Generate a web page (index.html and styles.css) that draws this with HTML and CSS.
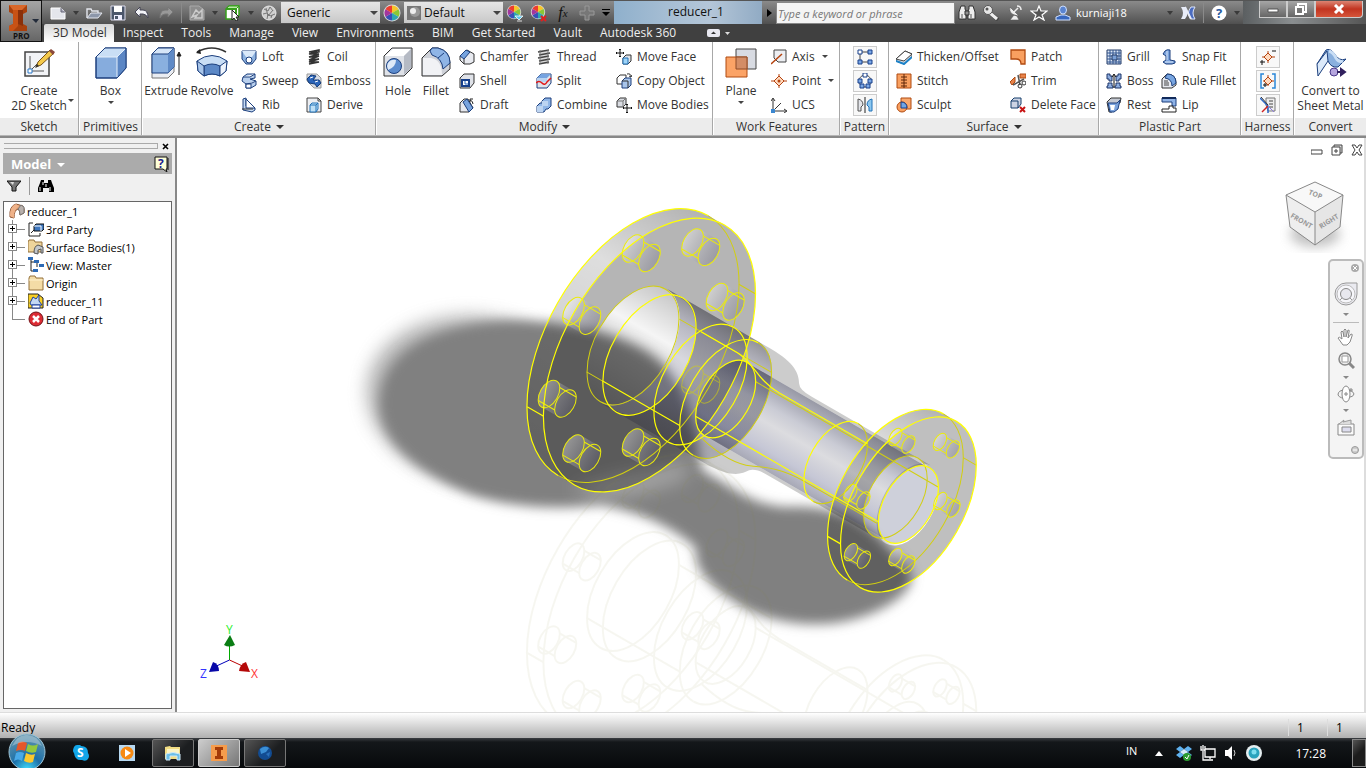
FILE: index.html
```html
<!DOCTYPE html>
<html lang="en">
<head>
  <meta charset="UTF-8">
  <meta name="viewport" content="width=device-width, initial-scale=1.0">
  <title>reducer_1</title>
  <link rel="stylesheet" href="styles.css">
</head>
<body>
<div class="app">

  <header class="header">
    <button class="app-button" aria-label="Application menu">
      <svg width="40" height="40" viewBox="0 0 40 40">
        <path d="M8 4h18v7l-4 2v10l4 2v5H8v-5l4-2V13l-4-2z" fill="#a8400c"/>
        <path d="M8 4h18l-5 5H12z" fill="#d9682a"/><path d="M12 9h5v16l-5 5H8v-5l4-2z" fill="#c85215"/>
        <path d="M17 9h5v16l-5-2z" fill="#8a300a"/>
        <path d="M31 18h7l-3 4z" fill="#222b3a"/>
        <text x="12" y="38" font-size="8" font-weight="700" fill="#111">PRO</text>
      </svg>
    </button>

    <!-- Title bar -->
    <div class="titlebar">
      <button class="qat" aria-label="New"><svg width="18" height="16" viewBox="0 0 18 16"><path d="M2 3h10l4 4v7H2z" fill="#e4e6ec" stroke="#fff"/><path d="M12 3v4h4" fill="#aab" stroke="#667"/></svg></button>
      <span class="caret"></span>
      <button class="qat" aria-label="Open"><svg width="18" height="16" viewBox="0 0 18 16"><path d="M2 13V4h4l1 2h6v2" fill="none" stroke="#e5e7ee" stroke-width="1.4"/><path d="M2 13l4-5h11l-4 5z" fill="#8d97aa" stroke="#e5e7ee"/></svg></button>
      <button class="qat" aria-label="Save"><svg width="16" height="16" viewBox="0 0 16 16"><path d="M1 1h14v14H1z" fill="#4b566b" stroke="#dde"/><path d="M4 1h8v6H4z" fill="#fff"/><path d="M4 10h8v5H4z" fill="#eef"/><path d="M5 11h3v3H5z" fill="#4b566b"/></svg></button>
      <button class="qat" aria-label="Undo"><svg width="16" height="16" viewBox="0 0 16 16"><path d="M6 2v3h3q5 0 5 8-2-4-5-4H6v3L1 7z" fill="#f3f4f8" stroke="#445"/></svg></button>
      <button class="qat" aria-label="Redo"><svg width="16" height="16" viewBox="0 0 16 16"><path d="M10 2v3H7q-5 0-5 8 2-4 5-4h3v3l5-5z" fill="#999" stroke="#777"/></svg></button>
      <span class="sep"></span>
      <button class="qat" aria-label="Update"><svg width="16" height="16" viewBox="0 0 16 16"><path d="M1 1h9l5 4v10H1z" fill="#8d8d8d" stroke="#aaa"/><path d="M3 12l4-7 3 3 3-3v8H6l2-3z" fill="none" stroke="#ccc" stroke-width="1.5"/></svg></button>
      <span class="caret"></span>
      <button class="qat" aria-label="Select"><svg width="18" height="16" viewBox="0 0 18 16"><path d="M2 4l3-3h10v9l-3 4H2z" fill="#fff" stroke="#37a01c" stroke-width="1.500"/><path d="M2 4l3-3h10l-3 3z" fill="#b9eaa6" stroke="#37a01c"/><path d="M2 4h10v10" fill="none" stroke="#37a01c" stroke-width="2"/><path d="M8 5v10l2-2 2 3 2-1-2-3h3z" fill="#fff" stroke="#222"/></svg></button>
      <span class="caret"></span>
      <button class="qat" aria-label="Appearance"><svg width="16" height="16" viewBox="0 0 16 16"><circle cx="8" cy="8" r="7" fill="#d0d0d0" stroke="#e5e5e5"/><path d="M3 4l4 2 2-4 3 4M2 9l4-1 3 3 5-2M6 14l1-5M10 13l1-3M5 3l2 8 5-6" fill="none" stroke="#777"/></svg></button>
      <label class="combo"><select aria-label="Material"><option>Generic</option></select></label>
      <button class="qat" aria-label="Colour wheel"><svg width="18" height="18" viewBox="-9 -9 18 18"><use href="#wheel"/></svg></button>
      <label class="combo combo-ball"><svg width="14" height="14" viewBox="0 0 14 14"><path d="M0 0h14v14H0z" fill="#777"/><circle cx="8" cy="6" r="5" fill="#999"/><circle cx="6" cy="5" r="3" fill="#eee"/></svg><select aria-label="Appearance"><option>Default</option></select></label>
      <button class="qat" aria-label="Adjust"><svg width="18" height="18" viewBox="-9 -9 18 18"><g transform="translate(-1 -1) scale(.85)"><use href="#wheel"/></g><path d="M0 3h8L4 7zM2 8h5" fill="#5ac8ee" stroke="#fff" stroke-width=".8"/></svg></button>
      <button class="qat" aria-label="Clear"><svg width="18" height="18" viewBox="-9 -9 18 18"><g transform="translate(-1 -1) scale(.85)"><use href="#wheel"/></g><path d="M2 3l5 5M7 3L2 8" stroke="#e02020" stroke-width="2"/></svg></button>
      <button class="qat fx">f<sub>x</sub></button>
      <button class="qat" aria-label="Add"><svg width="16" height="16" viewBox="0 0 16 16"><path d="M6 1h4v5h5v4h-5v5H6v-5H1V6h5z" fill="#777" stroke="#999"/></svg></button>
      <button class="qat-more" aria-label="Customize"><svg width="8" height="8" viewBox="0 0 8 8"><path d="M0 0h8v1H0zM0 3h8L4 7z"/></svg></button>

      <div class="doc-title">reducer_1</div>
      <button class="play" aria-label="Expand search"><svg width="5" height="8" viewBox="0 0 5 8"><path d="M0 0l5 4-5 4z"/></svg></button>
      <input class="search" type="text" aria-label="Search" placeholder="Type a keyword or phrase">

      <div class="info">
        <button class="qat" aria-label="Find"><svg width="18" height="16" viewBox="0 0 18 16"><path d="M3 1h4v3l1 2v8H1V7zM11 1h4l2 6v7h-7V6l1-2zM7 6h4v4H7z" fill="#eee" stroke="#333"/><path d="M4 9v4M13 9v4" stroke="#555"/></svg></button>
        <button class="qat" aria-label="Subscription"><svg width="18" height="16" viewBox="0 0 18 16"><path d="M8 8l8 7" stroke="#444" stroke-width="4"/><path d="M8 8l7 6" stroke="#eee" stroke-width="3"/><circle cx="6" cy="5" r="4.500" fill="#e6e6e6" stroke="#555"/><circle cx="5" cy="4" r="1.500" fill="#555"/></svg></button>
        <button class="qat" aria-label="Communication"><svg width="16" height="16" viewBox="0 0 16 16"><path d="M3 2q-2 8 9 9zM7 10l-4 5h9l-2-4z" fill="#eee" stroke="#555" stroke-width=".6"/><path d="M7 7l4-4M10 1q4 0 4 4" stroke="#eee" stroke-width="1.500" fill="none"/></svg></button>
        <button class="qat" aria-label="Favorites"><svg width="18" height="16" viewBox="0 0 18 16"><path d="M9 1l2 5h6l-5 4 2 5-5-3-5 3 2-5-5-4h6z" fill="#555" stroke="#fff" stroke-width="1.200"/></svg></button>
        <button class="qat user"><svg width="16" height="16" viewBox="0 0 16 16"><ellipse cx="8" cy="5" rx="3.500" ry="4" fill="#5a84d0" stroke="#cfe0ff"/><path d="M1 15v-3l5-2h4l5 2v3z" fill="#3767be" stroke="#cfe0ff"/></svg>kurniaji18</button>
        <span class="caret"></span>
        <button class="qat" aria-label="Exchange"><svg width="16" height="14" viewBox="0 0 16 14"><path d="M1 1h4q5 6 0 12H1q4-6 0-12z" fill="#e8ecf8"/><path d="M15 1h-4q-5 6 0 12h4q-4-6 0-12z" fill="#4b6cc0" stroke="#dce4f8"/><path d="M5 1l6 12" stroke="#e8ecf8" stroke-width="2"/></svg></button>
        <span class="sep"></span>
        <button class="qat" aria-label="Help"><svg width="16" height="16" viewBox="0 0 16 16"><circle cx="8" cy="8" r="7.500" fill="#fff"/><text x="5" y="13" font-size="13" font-weight="700" fill="#2a5a9e">?</text></svg></button>
        <span class="caret"></span>
      </div>

      <div class="window-buttons">
        <button aria-label="Minimize"><svg width="14" height="10" viewBox="0 0 14 10"><path d="M2 5h10v3H2z" fill="#fff" stroke="#555"/></svg></button>
        <button aria-label="Restore"><svg width="14" height="12" viewBox="0 0 14 12"><path d="M4 1h8v8H4z" fill="none" stroke="#fff" stroke-width="2"/><path d="M2 4h7v7H2z" fill="#777" stroke="#fff" stroke-width="2"/></svg></button>
        <button class="close" aria-label="Close"><svg width="12" height="10" viewBox="0 0 12 10"><path d="M2 1l8 8M10 1L2 9" stroke="#fff" stroke-width="3"/></svg></button>
      </div>
    </div>

    <nav class="tabs">
      <button class="active">3D Model</button><button>Inspect</button><button>Tools</button><button>Manage</button><button>View</button><button>Environments</button><button>BIM</button><button>Get Started</button><button>Vault</button><button>Autodesk 360</button>
      <button class="ribbon-toggle" aria-label="Minimize ribbon"><svg width="24" height="8" viewBox="0 0 24 8"><rect width="13" height="8" rx="2" fill="#e8e8f0"/><path d="M4 5h5L6.500 2.500z" fill="#333"/><path d="M18 3h5l-2.500 3z" fill="#ddd"/></svg></button>
    </nav>
  </header>

  <!-- Ribbon -->
  <div class="ribbon">
    <section class="panel p-sketch">
      <div class="tools">
        <button class="big"><svg width="32" height="32" viewBox="0 0 32 32"><path d="M2 5h24v24H2z" fill="#f2f3f6" stroke="#444" stroke-width="1.500"/><path d="M7 9v15h14M7 24l9-9" fill="none" stroke="#555"/><path d="M5 22h4v4H5z" fill="#fff" stroke="#2a78c8"/><path d="M13 20l2-5L27 3l4 3-13 12z" fill="#f4c94b" stroke="#7a5217"/><path d="M26 4l2-2 4 3-2 3z" fill="#8b4a3c"/><path d="M12 21l2-4 2 2z" fill="#333"/></svg>Create<br>2D Sketch</button>
        <span class="drop side"></span>
      </div>
      <h2>Sketch</h2>
    </section>

    <section class="panel p-prim">
      <div class="tools">
        <button class="big"><svg width="32" height="32" viewBox="0 0 32 32"><path d="M1 10L10 1h21v20l-9 10H1z" fill="#86acdd" stroke="#1c3f7d"/><path d="M1 10L10 1h21l-9 9z" fill="#c9def5"/><path d="M22 10l9-9v20l-9 10z" fill="#5b86c4"/><path d="M1 10L10 1h21v20l-9 10H1z" fill="none" stroke="#1c3f7d"/><path d="M2 10h20v20M22 10l8-8" fill="none" stroke="#e4effb"/></svg>Box<span class="drop"></span></button>
      </div>
      <h2>Primitives</h2>
    </section>

    <section class="panel p-create">
      <div class="tools">
        <button class="big"><svg width="32" height="32" viewBox="0 0 32 32"><path d="M2 7l6-6h16v24l-6 6H2z" fill="#e9ecf2" stroke="#777"/><path d="M2 7l6-6h16v19l-6 6H2z" fill="#8ab0df" stroke="#1c3f7d"/><path d="M2 7l6-6h16l-6 6z" fill="#d5e5f7" stroke="#1c3f7d"/><path d="M18 7l6-6v19l-6 6z" fill="#5f8ac6"/><path d="M29 28V7M27 9l2-4 2 4z" stroke="#222" fill="#222"/></svg>Extrude</button>
        <button class="big"><svg width="32" height="32" viewBox="0 0 32 32"><path d="M1 5Q16-3 30 5" fill="none" stroke="#333" stroke-width="1.500"/><path d="M0 6l4-4 1 5z" fill="#222"/><path d="M1 14Q16 3 31 14l-1 10-6 5q-8-4-16 0l-6-5z" fill="#c9def5" stroke="#1c3f7d"/><path d="M8 19q8-4 16 0v10q-8-4-16 0z" fill="#5c88c6" stroke="#1c3f7d"/><path d="M1 14l7 5v10l-6-5z" fill="#a9c6ea" stroke="#1c3f7d"/><path d="M31 14l-7 5v10l6-5z" fill="#eef4fc" stroke="#1c3f7d"/></svg>Revolve</button>
        <div class="cols">
          <button><svg viewBox="0 0 16 16"><path d="M1 2h14v8l-4 5H5l-4-5z" fill="#8fb3e0" stroke="#1c3f7d"/><path d="M1 2h14l-4 6H5z" fill="#dbe9f9"/><circle cx="8" cy="11" r="3" fill="#fff" stroke="#1c3f7d"/></svg>Loft</button>
          <button><svg viewBox="0 0 16 16"><path d="M2 4l4-3 8 0v4l-5 1 6 2v4l-5 3H5v-4l-4-3z" fill="#b9d0ee" stroke="#1c3f7d"/><path d="M2 4h7l5-3M5 11l6-1 4-2M5 11v4h5v-4z" fill="#fff" stroke="#1c3f7d"/></svg>Sweep</button>
          <button><svg viewBox="0 0 16 16"><path d="M2 2l3-1v8l9 2v2l-3 2-9-2z" fill="#c7dbf3" stroke="#1c3f7d"/><path d="M5 2l9 9H5z" fill="#fff" stroke="#1c3f7d"/><path d="M1 12h11" stroke="#333"/></svg>Rib</button>
          <button><svg viewBox="0 0 16 16"><path d="M3 3l10-2v2L3 5l10 0-10 3 10-1-10 4 10-1-10 3 10 0-10 2M3 3l10 0" fill="none" stroke="#333" stroke-width="1.500"/></svg>Coil</button>
          <button><svg viewBox="0 0 16 16"><path d="M1 1h10l4 4v10H8L1 8z" fill="#d7dbe2" stroke="#999"/><path d="M1 6l4-4 5 1-3 4 6 0 2 3-4 4-2-3-6-1z" fill="#2b65ba" stroke="#153c78"/><path d="M4 5l3-1M9 9l3-1" stroke="#fff"/></svg>Emboss</button>
          <button><svg viewBox="0 0 16 16"><path d="M1 1h11l3 3v11H1z" fill="#eceef2" stroke="#444"/><path d="M12 1v3h3" fill="none" stroke="#444"/><path d="M4 8l2-2h6v6l-2 3H4z" fill="#bfe0f6" stroke="#2272b8"/><path d="M4 8h6v7M10 8l2-2" fill="none" stroke="#2272b8"/></svg>Derive</button>
        </div>
      </div>
      <h2>Create <span class="fly"></span></h2>
    </section>

    <section class="panel p-modify">
      <div class="tools">
        <button class="big"><svg width="30" height="32" viewBox="0 0 30 32"><path d="M1 9l8-8h20v20l-8 8H1z" fill="#dfe2e8" stroke="#333"/><path d="M2 9l8-7h18l-7 7z" fill="#fff"/><path d="M21 9l7-7v19l-7 7z" fill="#b5bac4"/><circle cx="11" cy="19" r="7.500" fill="#5c8cce" stroke="#1c3f7d"/><path d="M4 19a7 7 0 0 1 9-6q0 7-8 10z" fill="#dfeaf8"/></svg>Hole</button>
        <button class="big"><svg width="30" height="32" viewBox="0 0 30 32"><path d="M1 11l10-10h6q12 3 12 15v6l-8 7H1z" fill="#cfd2d9" stroke="#333"/><path d="M11 1h6q12 3 12 15l-7 6q-1-11-11-14l-2-4z" fill="#8fb5e6" stroke="#1c3f7d"/><path d="M2 11h8q11 2 11 17H2z" fill="#f1f2f5"/><path d="M23 6l-6 5" stroke="#1c3f7d"/></svg>Fillet</button>
        <div class="cols">
          <button><svg viewBox="0 0 16 16"><path d="M1 7l7-6 7 4v8l-4 2H5l-4-4z" fill="#e8eaf0" stroke="#333"/><path d="M1 7l6-6 4 2-6 7z" fill="#76a3df" stroke="#1c3f7d"/><path d="M5 10v5" stroke="#333"/></svg>Chamfer</button>
          <button><svg viewBox="0 0 16 16"><path d="M1 5l4-4h10v9l-4 5H1z" fill="#dfe2e8" stroke="#333"/><path d="M3 7h7v6H3z" fill="#fff" stroke="#173f8a" stroke-width="2"/><path d="M6 8v3h3" stroke="#2b65ba" fill="none"/></svg>Shell</button>
          <button><svg viewBox="0 0 16 16"><path d="M1 6l4-4h4l5 9-4 4H1z" fill="#e6e8ee" stroke="#333"/><path d="M4 5l4-3 6 9-4 4z" fill="#78a3dd" stroke="#1c3f7d"/><path d="M11 3q3 1 3 4M11 5V2h3" fill="none" stroke="#222"/></svg>Draft</button>
          <button><svg viewBox="0 0 16 16"><path d="M4 1h8v14H4z" fill="#ddd"/><path d="M2 3l11-2M3 6l11-2M2 9l11-2M3 12l11-2M3 15l10-2" stroke="#444" stroke-width="1.500"/><path d="M4 1v14M12 1v14" stroke="#777"/></svg>Thread</button>
          <button><svg viewBox="0 0 16 16"><path d="M1 5l4-4h10v9l-4 5H1z" fill="#dfe3ea" stroke="#1c3f7d"/><path d="M1 5l4-4h10l-4 4z" fill="#76a3df"/><path d="M1 5h10v4H1z" fill="#b9d2f0"/><path d="M0 10q3-3 6 0t5-1l4-4" fill="none" stroke="#e01818" stroke-width="1.500"/></svg>Split</button>
          <button><svg viewBox="0 0 16 16"><path d="M6 4l3-3h6v8l-3 3h-2l-2 3H1V9l3-3h2z" fill="#8fb5e6" stroke="#1c3f7d"/><path d="M6 4h6v5H7v6H1V9h5z" fill="#bcd4f1"/></svg>Combine</button>
          <button><svg viewBox="0 0 16 16"><path d="M4 0v8M0 4h8M3 1l1-1 1 1M3 7l1 1 1-1M1 3L0 4l1 1M7 3l1 1-1 1" stroke="#111" fill="none"/><path d="M7 9l3-3h5v6l-3 3H7z" fill="#e1e4e9" stroke="#333"/><path d="M7 9h5v6H7z" fill="#9fd4f7" stroke="#2272b8"/></svg>Move Face</button>
          <button><svg viewBox="0 0 16 16"><path d="M1 5l3-3h6v6l-3 3H1z" fill="#fff" stroke="#333"/><path d="M6 8l3-3h6v7l-3 3H6z" fill="#a9c5ea" stroke="#1c3f7d"/><path d="M6 8h6v7M11 1q4-1 4 3M13 3l2 1 1-2" fill="none" stroke="#333"/></svg>Copy Object</button>
          <button><svg viewBox="0 0 16 16"><path d="M1 4l3-3h6v6l-3 3H1z" fill="#dadde3" stroke="#333"/><path d="M1 4h6v6M7 4l3-3" stroke="#777" fill="none"/><path d="M11 7v9M7 11h9M10 8l1-1 1 1M10 15l1 1 1-1M8 10l-1 1 1 1M15 10l1 1-1 1" stroke="#111" fill="none"/></svg>Move Bodies</button>
        </div>
      </div>
      <h2>Modify <span class="fly"></span></h2>
    </section>

    <section class="panel p-work">
      <div class="tools">
        <button class="big"><svg width="32" height="32" viewBox="0 0 32 32"><path d="M11 2h20v20H11z" fill="#d8dbe2" stroke="#444"/><path d="M1 10h21v20H1z" fill="#fba366" stroke="#b04a10"/><path d="M11 10h11v12H11z" fill="#d38d66" stroke="#8e4a26"/></svg>Plane<span class="drop"></span></button>
        <div class="cols">
          <button><svg viewBox="0 0 16 16"><path d="M3 1h12v12H7L3 9z" fill="#eceef2" stroke="#444"/><path d="M0 15L11 5" stroke="#b5430f" stroke-width="1.500"/></svg>Axis<span class="drop"></span></button>
          <button><svg viewBox="0 0 16 16"><path d="M8 1v14M0 8h16" stroke="#b5430f"/><path d="M8 3l5 5-5 5-5-5z" fill="#ffd9bd" stroke="#b5430f"/><circle cx="8" cy="8" r="1.500" fill="#b5430f"/></svg>Point<span class="drop"></span></button>
          <button><svg viewBox="0 0 16 16"><path d="M2 2v12h13M2 14l8-8M0 4l2-3 2 3M13 12l3 2-3 2" fill="none" stroke="#333"/><path d="M0 12h4v4H0z" fill="#3a87d0"/></svg>UCS</button>
        </div>
      </div>
      <h2>Work Features</h2>
    </section>

    <section class="panel p-pattern">
      <div class="tools icons-only">
        <button aria-label="Rectangular"><svg viewBox="0 0 16 16"><path d="M3 3h10M3 3v10M3 13h10" stroke="#444" fill="none"/><path d="M1 1h4v4H1z" fill="#fff" stroke="#173f8a"/><path d="M11 1h4v4h-4zM1 11h4v4H1zM11 11h4v4h-4z" fill="#7aa7e6" stroke="#173f8a"/></svg></button>
        <button aria-label="Circular"><svg viewBox="0 0 16 16"><circle cx="8" cy="8" r="6" fill="none" stroke="#555"/><path d="M6 0h4v4H6z" fill="#fff" stroke="#173f8a"/><path d="M1 6h4v4H1zM11 6h4v4h-4zM3 11h4v4H3zM9 11h4v4H9z" fill="#7aa7e6" stroke="#173f8a"/></svg></button>
        <button aria-label="Mirror"><svg viewBox="0 0 16 16"><path d="M8 0v16" stroke="#222"/><path d="M1 2q5 1 5 6l-2 2v4H1z" fill="#e3e5ea" stroke="#555"/><path d="M15 2q-5 1-5 6l2 2v4h3z" fill="#8cc7ef" stroke="#2272b8"/></svg></button>
      </div>
      <h2>Pattern</h2>
    </section>

    <section class="panel p-surface">
      <div class="tools">
        <div class="cols">
          <button><svg viewBox="0 0 16 16"><path d="M0 10l9-8 7 3v3l-8 7-8-3z" fill="#d9dce2" stroke="#444"/><path d="M0 10l9-8 7 3-8 7z" fill="#fff" stroke="#444"/><path d="M0 12l8 3 8-7" fill="none" stroke="#1c82c8" stroke-width="2"/></svg>Thicken/Offset</button>
          <button><svg viewBox="0 0 16 16"><path d="M1 1h14v14H1z" fill="#f9a060" stroke="#b04a10"/><path d="M8 1v14M5 4h6M5 7h6M5 10h6M5 13h6" stroke="#5e2708"/></svg>Stitch</button>
          <button><svg viewBox="0 0 16 16"><path d="M5 1h10v11H5z" fill="#f9a86d" stroke="#b04a10"/><circle cx="6" cy="10" r="5" fill="#f9a060" stroke="#b04a10"/><path d="M5 5q6 0 6 6H5z" fill="#6fa5e6" stroke="#173f8a"/></svg>Sculpt</button>
          <button><svg viewBox="0 0 16 16"><path d="M1 1h14v14h-4q0-5-5-5H1z" fill="#f9a060" stroke="#b04a10" stroke-width="1.300"/></svg>Patch</button>
          <button><svg viewBox="0 0 16 16"><path d="M0 9l5-5v5l-3 3zM10 1h6v4h-6z" fill="#e8834a" stroke="#b04a10"/><path d="M3 12L14 6M8 2l2 10" stroke="#555" stroke-width="1.500"/><circle cx="10" cy="13" r="2" fill="none" stroke="#333"/><circle cx="14" cy="10" r="2" fill="none" stroke="#333"/></svg>Trim</button>
          <button><svg viewBox="0 0 16 16"><path d="M1 4l3-3h7v6l-3 4H1z" fill="#cdd4e4" stroke="#173f6d"/><path d="M1 4h7v7" fill="none" stroke="#173f6d"/><path d="M10 10l5 5M15 10l-5 5" stroke="#c81414" stroke-width="2"/></svg>Delete Face</button>
        </div>
      </div>
      <h2>Surface <span class="fly"></span></h2>
    </section>

    <section class="panel p-plastic">
      <div class="tools">
        <div class="cols">
          <button><svg viewBox="0 0 16 16"><path d="M1 1h14v14H1z" fill="#dbe6f6" stroke="#223a66"/><path d="M4 1v14M7 1v14M10 1v14M13 1v14M1 4h14M1 7h14M1 10h14M1 13h14" stroke="#31558f"/><path d="M6 6h5v5H6z" fill="#7aa0d6" stroke="#223a66"/></svg>Grill</button>
          <button><svg viewBox="0 0 16 16"><path d="M1 1h3v2h2v5H3V6H1zM15 1h-3v2h-2v5h3V6h2zM2 10h4v3h1v2H1v-2h1zM10 10h4v3h1v2H9v-2h1z" fill="#8eaee0" stroke="#1c3468"/><path d="M8 15V2M6 4l2-3 2 3" stroke="#111" fill="none"/></svg>Boss</button>
          <button><svg viewBox="0 0 16 16"><path d="M1 5l4-4h10l-1 5-6 1-2 8H3z" fill="#c5cad4" stroke="#333"/><path d="M2 6h9l3-3-2 9-4 3H4z" fill="#7ba3dd" stroke="#1c3f7d"/><path d="M4 8h5l-1 5H5z" fill="#fff"/></svg>Rest</button>
          <button><svg viewBox="0 0 16 16"><path d="M4 2q2-2 5-1v10l5 1v2l-3 1H5l-3-2 3-2V7L2 5z" fill="#7ba3dd" stroke="#1c3f7d"/><path d="M6 2v9M4 13h8" stroke="#dbe8f8"/></svg>Snap Fit</button>
          <button><svg viewBox="0 0 16 16"><path d="M1 6l5-5q9 0 9 9v2l-4 3H1z" fill="#e6e9ef" stroke="#333"/><path d="M6 1q9 0 9 9l-4 3q0-7-7-8z" fill="#78a5e0" stroke="#1c3f7d"/><path d="M3 8h4M3 10h5M3 12h5" stroke="#444"/></svg>Rule Fillet</button>
          <button><svg viewBox="0 0 16 16"><path d="M1 1h14v8h-4V5H1z" fill="#8eb2e6" stroke="#1c3f7d"/><path d="M1 15v-3h7V9h4v2h3v4z" fill="#fff" stroke="#222"/><path d="M1 1h14" stroke="#112a5a" stroke-width="2"/></svg>Lip</button>
        </div>
      </div>
      <h2>Plastic Part</h2>
    </section>

    <section class="panel p-harness">
      <div class="tools icons-only">
        <button aria-label="Place pin"><svg viewBox="0 0 16 16"><path d="M8 2v12M2 8h13" stroke="#b5430f"/><path d="M8 4l4 4-4 4-4-4z" fill="#ffd9bd" stroke="#b5430f"/><path d="M12 2h4M0 13h5M2 11v5" stroke="#111"/></svg></button>
        <button aria-label="Pin group"><svg viewBox="0 0 16 16"><path d="M4 1H1v14h3M12 1h3v14h-3" fill="none" stroke="#2a86d8" stroke-width="1.500"/><path d="M8 2v11M3 8h11" stroke="#b5430f"/><path d="M8 4l4 4-4 4-4-4z" fill="#ffd9bd" stroke="#b5430f"/><path d="M3 12h4M5 10v4" stroke="#111"/></svg></button>
        <button aria-label="Harness properties"><svg viewBox="0 0 16 16"><path d="M6 1h9v13H8L6 8z" fill="#eee" stroke="#777"/><path d="M9 4h4M9 7h4M9 10h4" stroke="#444"/><path d="M0 1l8 8v7" stroke="#2a66c8" fill="none" stroke-width="1.500"/><path d="M8 9l-6 6" stroke="#d02020" stroke-width="1.500"/><path d="M1 0l7 8" stroke="#333"/><path d="M8 9l6 6" stroke="#8a7ad8"/></svg></button>
      </div>
      <h2>Harness</h2>
    </section>

    <section class="panel p-convert">
      <div class="tools">
        <button class="big"><svg width="32" height="32" viewBox="0 0 32 32"><path d="M2 17L11 3q4-2 8 3 5 9 12 6l-8 8q-7 1-10-6z" fill="#8ab0de" stroke="#1c3f7d"/><path d="M2 17L12 4l1 10-10 15z" fill="#dceafa" stroke="#1c3f7d"/><path d="M14 4q4 1 7 7 3 5 7 3" stroke="#c9def5" fill="none" stroke-width="3"/><circle cx="19" cy="25" r="4" fill="#b6a6de" stroke="#4b3a8c"/><path d="M22 25h5M26 22l4 3-4 3z" stroke="#31205e" stroke-width="2" fill="#31205e"/></svg>Convert to<br>Sheet Metal</button>
      </div>
      <h2>Convert</h2>
    </section>
  </div>

  <main class="workspace">
    <!-- Model browser -->
    <aside class="browser">
      <div class="grip"><span></span><button aria-label="Close panel"><svg width="7" height="7" viewBox="0 0 7 7"><path d="M1 1l5 5M6 1L1 6" stroke="#000" stroke-width="1.600"/></svg></button></div>
      <div class="browser-head"><button>Model <span class="fly"></span></button>
        <svg width="15" height="16" viewBox="0 0 15 16"><path d="M1 1h12v12h-1l1 3-4-3H1z" fill="#ffffd8" stroke="#111"/><path d="M14 2v12" stroke="#111"/><text x="4" y="12" font-size="12" font-weight="700" fill="#1c1c90">?</text></svg>
      </div>
      <div class="browser-tools">
        <button aria-label="Filter"><svg width="14" height="12" viewBox="0 0 14 12"><path d="M0 1h14L9 7v4H5V7z" fill="#777" stroke="#111"/><path d="M3 2h4l-1 3z" fill="#ddd"/></svg></button>
        <button aria-label="Find"><svg width="16" height="14" viewBox="0 0 16 14"><path d="M3 1h3v3h4V1h3l1 3 2 5v4h-5V9H5v4H0V9l2-5z"/><path d="M2 8v4M12 8v4M5 3v3M8 5v3" stroke="#fff"/></svg></button>
      </div>
      <ul class="tree">
        <li class="root"><svg viewBox="0 0 16 16"><path d="M1 14Q0 3 7 1l7 2q2 3 1 7l-4 2q0-5-2-6-4 1-4 9z" fill="#e9a77a" stroke="#8a5130"/><path d="M1 13Q1 3 7 1l3 2q-5 2-5 12z" fill="#efb289"/><path d="M9 6l3-4 3 2v6l-4 2q0-5-2-6z" fill="#b9b1ad" stroke="#777"/></svg>reducer_1</li>
        <li><i class="plus"></i><svg viewBox="0 0 16 16"><path d="M5 2H1v13h11v-3" fill="#fff" stroke="#222"/><path d="M3 12l4-4" stroke="#222"/><path d="M6 5l2-2h8v5l-2 2H6z" fill="#3f78c0" stroke="#111"/><path d="M6 5h7v5" fill="none" stroke="#fff"/></svg>3rd Party</li>
        <li><i class="plus"></i><svg viewBox="0 0 16 16"><path d="M0 3l1-2h5l1 2h7v10H0z" fill="#eed49b" stroke="#94713a"/><path d="M6 14q0-7 4-8l5 2v6h-2v-4l-3 1v4z" fill="#c3c7cc" stroke="#555"/></svg>Surface Bodies(1)</li>
        <li><i class="plus"></i><svg viewBox="0 0 16 16"><path d="M3 2v12h3M3 5h4M9 5v5M11 9h2" fill="none" stroke="#222"/><path d="M0 0h5v3H0zM6 3h5v3H6zM11 7h5v3h-5zM5 12h5v3H5z" fill="#2d6ab5"/></svg>View: Master</li>
        <li><i class="plus"></i><svg viewBox="0 0 16 16"><path d="M1 3l1-2h5l1 2h7v12H1z" fill="#f4dca6" stroke="#94713a"/><path d="M1 5h14" stroke="#fff1cc"/></svg>Origin</li>
        <li><i class="plus"></i><svg viewBox="0 0 16 16"><path d="M0 1h10l5 4v10H0z" fill="#f8cf25" stroke="#222"/><path d="M2 10l3-6 3 2 3-4v6l3 4H3z" fill="#c3d8f3" stroke="#1c3f9d"/><path d="M4 12h8v3H4z" fill="#fff" stroke="#1c3f9d"/></svg>reducer_11</li>
        <li class="end"><svg viewBox="0 0 16 16"><circle cx="8" cy="8" r="7" fill="#dc2c34" stroke="#721217"/><path d="M5 5l6 6M11 5l-6 6" stroke="#fff" stroke-width="2.500"/></svg>End of Part</li>
      </ul>
    </aside>

    <div class="viewport">
      <svg class="scene" viewBox="177 138 1187 574" preserveAspectRatio="xMinYMin meet">
        <defs>
          <g id="wheel" stroke="none">
            <circle r="8.500" fill="#ddd"/>
            <path d="M0 0V-7.500A7.500 7.500 0 0 1 6.500-3.750z" fill="#f7c52b"/><path d="M0 0L6.500-3.750A7.500 7.500 0 0 1 6.500 3.750z" fill="#8bc834"/>
            <path d="M0 0L6.500 3.750A7.500 7.500 0 0 1 0 7.500z" fill="#2fa6b0"/><path d="M0 0V7.500A7.500 7.500 0 0 1-6.500 3.750z" fill="#3850b8"/>
            <path d="M0 0L-6.500 3.750A7.500 7.500 0 0 1-6.500-3.750z" fill="#a3369d"/><path d="M0 0L-6.500-3.750A7.500 7.500 0 0 1 0-7.500z" fill="#ec3d2f"/>
          </g>
          <filter id="soft" x="-20%" y="-20%" width="140%" height="140%"><feGaussianBlur stdDeviation="6"/></filter>
          <filter id="soft-wide" x="-30%" y="-30%" width="160%" height="160%"><feGaussianBlur stdDeviation="9"/></filter>
          <linearGradient id="rim" x2="0" y2="1"><stop offset="0" stop-opacity=".3"/><stop offset=".3" stop-opacity=".13"/><stop offset="1" stop-opacity=".24"/></linearGradient>
          <linearGradient id="tube" x2="0" y2="1">
            <stop offset="0" stop-color="#383842" stop-opacity=".55"/><stop offset=".18" stop-color="#50506a" stop-opacity=".4"/>
            <stop offset=".4" stop-color="#50506a" stop-opacity=".22"/><stop offset=".68" stop-color="#55587c" stop-opacity=".32"/>
            <stop offset=".88" stop-color="#404050" stop-opacity=".45"/><stop offset="1" stop-color="#333340" stop-opacity=".4"/>
          </linearGradient>
          <linearGradient id="core" x2="0" y2="1">
            <stop offset="0" stop-color="#44465c" stop-opacity=".55"/><stop offset=".2" stop-color="#50536e" stop-opacity=".42"/>
            <stop offset=".32" stop-color="#606480" stop-opacity=".33"/><stop offset=".5" stop-color="#606070" stop-opacity=".22"/>
            <stop offset=".78" stop-color="#60648c" stop-opacity=".36"/><stop offset="1" stop-color="#50526c" stop-opacity=".5"/>
          </linearGradient>
          <linearGradient id="bore" x2="0" y2="1"><stop offset="0" stop-opacity=".22"/><stop offset=".35" stop-opacity=".04"/><stop offset=".6" stop-opacity=".2"/><stop offset="1" stop-opacity=".32"/></linearGradient>
          <linearGradient id="drill"><stop offset="0" stop-color="#fff" stop-opacity=".35"/><stop offset="1" stop-color="#60607a" stop-opacity=".3"/></linearGradient>

          <!-- bolt holes: local x runs along the pipe axis -->
          <g id="hole"><ellipse rx="9" ry="15"/><ellipse cx="19" rx="9" ry="15"/><path d="M-6 11h19M6-11h19"/></g>
          <g id="hole-sm"><ellipse rx="5.500" ry="9.500"/><ellipse cx="15" rx="5.500" ry="9.500"/><path d="M-4 7h15M4-7h15"/></g>
          <path id="hole-fill" d="M0-15A9 15 0 0 0 0 15H19A9 15 0 0 0 19-15z"/>
          <path id="hole-sm-fill" d="M0-9A5.500 9 0 0 0 0 9H15A5.500 9 0 0 0 15-9z"/>

          <g id="wire-back">
            <path d="M0-150A86.600 150 0 0 1 0 150"/>
            <ellipse rx="37.500" ry="65"/>
            <path d="M-27 46H-8M27-46H133M61-106H80"/>
            <path d="M107-65A37.500 65 0 0 1 107 65"/>
            <path d="M106 46C132 52 150 51 163 45S190 32 216 32H300M124-30H335"/>
            <path d="M234-45A26 45 0 0 1 234 45"/>
            <ellipse cx="303" rx="26" ry="45"/>
            <path d="M303-96A55.400 96 0 0 1 303 96M342-68H357"/>
          </g>
          <g id="wire-front">
            <path d="M0-150A86.600 150 0 0 0 0 150"/>
            <ellipse cx="19" rx="86.600" ry="150"/>
            <path d="M-61 106H-42M-8 46H80M52-46H94C116-45 122-33 150-32H252M90 30H301"/>
            <ellipse cx="19" rx="38" ry="66"/>
            <ellipse cx="78" rx="38" ry="66"/>
            <path d="M107-65A37.500 65 0 0 0 107 65"/>
            <ellipse cx="107" rx="24.500" ry="42.500"/>
            <path d="M234-45A26 45 0 0 0 234 45"/>
            <path d="M303-96A55.400 96 0 0 0 303 96"/>
            <ellipse cx="318" rx="55.400" ry="96"/>
            <ellipse cx="318" rx="24.500" ry="42.500"/>
            <path d="M264 68H279"/>
          </g>
          <g id="wire-holes">
            <use href="#hole" x="-68.700"/><use href="#hole" x="-48.500" y="-84"/><use href="#hole" y="-119"/><use href="#hole" x="48.500" y="-84"/>
            <use href="#hole" y="119"/><use href="#hole" x="48.500" y="84"/><use href="#hole" x="-48.500" y="84"/>
            <use href="#hole-sm" x="333" y="52"/><use href="#hole-sm" x="292" y="70"/><use href="#hole-sm" x="262" y="19"/>
            <use href="#hole-sm" x="273" y="-52"/><use href="#hole-sm" x="314" y="-70"/><use href="#hole-sm" x="344" y="-19"/>
          </g>
        </defs>

        <!-- ground shadow -->
        <ellipse cx="482" cy="401" rx="116" ry="84" fill="#808080" opacity=".6" transform="rotate(10 482 401)" filter="url(#soft-wide)"/>
        <g filter="url(#soft)" fill="#808080">
          <path d="M380 400C384 352 430 325 508 321C560 320 610 330 645 350C680 372 695 410 702 470C735 488 750 504 785 507C830 505 860 515 890 550C915 570 918 580 900 597C860 628 800 632 750 611C715 592 692 570 696 548C670 525 640 512 600 505C560 510 510 508 470 494C415 470 378 440 380 400z"/>
        </g>
        <path d="M570 488L620 474 690 462 684 480 640 494 600 500z" fill="#fff" opacity=".28" filter="url(#soft-wide)"/>

        <g transform="translate(633 345.500) rotate(30)">
          <path d="M0-150A86.600 150 0 0 0 0 150H19A86.600 150 0 0 1 19-150z" fill="url(#rim)"/>
          <path fill-rule="evenodd" d="M19-150A86.600 150 0 0 1 19 150A86.600 150 0 0 1 19-150zM0-65A37.500 65 0 0 0 0 65H19A38 65 0 0 0 19-65z" fill-opacity=".29"/>
          <path d="M0-65A37.500 65 0 0 0 0 65A37.500 65 0 0 0 0-65z" fill="url(#bore)"/>
          <path d="M0-66A38 66 0 0 1 0 66H107A37.500 66 0 0 0 107-66z" fill="url(#tube)"/>
          <path fill-rule="evenodd" d="M107-66H120C150-66 158-58 163-50Q166-45 180-45H318A26 45 0 0 0 318 45H180Q168 45 163 50C158 58 150 66 120 66H107A37.500 66 0 0 0 107-66zM107-42A24.500 42 0 0 0 107 42H318A24.500 42 0 0 1 318-42z" fill-opacity=".2"/>
          <path d="M107-42A24.500 42 0 0 0 107 42H318A24.500 42 0 0 1 318-42z" fill="url(#core)"/>
          <path d="M303-96A55.400 96 0 0 0 303 96H318A55.400 96 0 0 1 318-96z" fill="url(#rim)"/>
          <path fill-rule="evenodd" d="M318-96A55.400 96 0 0 1 318 96A55.400 96 0 0 1 318-96zM303-45A26 45 0 0 0 303 45H318A24.500 42 0 0 0 318-42z" fill-opacity=".25"/>
          <ellipse cx="318" rx="24.500" ry="42.500" fill="#c6c8d4" fill-opacity=".85"/>
          <g fill="url(#drill)">
            <use href="#hole-fill" x="-68.700"/><use href="#hole-fill" x="-48.500" y="-84"/><use href="#hole-fill" y="-119"/><use href="#hole-fill" x="48.500" y="-84"/>
            <use href="#hole-fill" y="119"/><use href="#hole-fill" x="48.500" y="84"/><use href="#hole-fill" x="-48.500" y="84"/>
            <use href="#hole-sm-fill" x="333" y="52"/><use href="#hole-sm-fill" x="292" y="70"/><use href="#hole-sm-fill" x="262" y="19"/>
            <use href="#hole-sm-fill" x="273" y="-52"/><use href="#hole-sm-fill" x="314" y="-70"/><use href="#hole-sm-fill" x="344" y="-19"/>
          </g>
          <g fill="none" stroke="#d2cf10"><use href="#wire-back"/><use href="#hole" x="68.700" opacity=".6"/></g>
          <g fill="none" stroke="#ecec0a"><use href="#wire-holes"/></g>
          <g fill="none" stroke="#ff0" stroke-width="1.200"><use href="#wire-front"/></g>
        </g>

        <!-- reflection on the ground plane -->
        <g transform="translate(633 591.500) rotate(30)" fill="none" stroke="#8a8a40" stroke-width="2" opacity=".07">
          <use href="#wire-back"/><use href="#wire-front"/><use href="#wire-holes"/><use href="#hole" x="68.700"/>
        </g>

        <!-- axis triad -->
        <g class="triad">
          <path d="M229.500 660V645" stroke="#0a0"/><path d="M229.500 660l-13 6" stroke="#00b"/><path d="M229.500 660l13 6" stroke="#b00"/>
          <path d="M224 645q5 3 11 0l-5-10z" fill="#0a7d14"/><path d="M209 672l4-10q6 2 6 9z" fill="#0808a8"/><path d="M250 672l-4-10q-6 2-7 9z" fill="#b40808"/>
          <text x="226" y="634" fill="#2dee2d">Y</text><text x="200" y="678" fill="#3434ff">Z</text><text x="251" y="678" fill="#ff3434">X</text>
        </g>

        <!-- view cube -->
        <g class="cube">
          <ellipse cx="1315" cy="234" rx="25" ry="13" fill="#999" opacity=".6" filter="url(#soft)"/>
          <path d="M1315 182l28 13-28 17-29-17z" fill="#f8f8f8"/><path d="M1286 195l29 17v33l-25-18z" fill="#eee"/><path d="M1343 195l-28 17v33l25-18z" fill="#e6e6e6"/>
          <path d="M1315 182l28 13-3 32-25 18-25-18-4-32zM1286 195l29 17 28-17M1315 212v33" fill="none" stroke="#888"/>
          <text x="1308" y="194" transform="rotate(22 1308 194)">TOP</text>
          <text x="1290" y="217" transform="rotate(30 1290 217)">FRONT</text>
          <text x="1321" y="229" transform="rotate(-32 1321 229)">RIGHT</text>
        </g>
      </svg>

      <div class="doc-buttons">
        <button aria-label="Minimize document"><svg width="12" height="12" viewBox="0 0 12 12"><path d="M0 6h11v4H0z" fill="#fff" stroke="#444"/></svg></button>
        <button aria-label="Restore document"><svg width="12" height="12" viewBox="0 0 12 12"><path d="M3 1h8v8H3z" fill="#ddd" stroke="#444"/><path d="M1 3h8v8H1z" fill="#fff" stroke="#444"/><path d="M4 6h2v2H4z" fill="none" stroke="#444"/></svg></button>
        <button aria-label="Close document"><svg width="12" height="12" viewBox="0 0 12 12"><path d="M1 1h3l2 3 2-3h3L8 6l3 5H8L6 8l-2 3H1l3-5z" fill="#fff" stroke="#444"/></svg></button>
      </div>

      <div class="navbar">
        <svg class="mini" width="8" height="8" viewBox="0 0 8 8"><circle cx="4" cy="4" r="4" fill="#aaa"/><path d="M2 2l4 4M6 2L2 6" stroke="#fff"/></svg>
        <button class="wheel" aria-label="Steering wheel"><svg width="24" height="24" viewBox="0 0 24 24"><path d="M1 12A11 11 0 0 1 12 1h11v11A11 11 0 0 1 1 12z" fill="#eaeaf0" stroke="#999"/><circle cx="12" cy="12" r="9" fill="#f6f6fa" stroke="#bbb"/><circle cx="12" cy="12" r="5.500" fill="#e8e8ee" stroke="#888"/><path d="M6 18l2-2M18 18l-2-2" stroke="#999"/></svg></button>
        <span class="drop"></span>
        <hr>
        <button aria-label="Pan"><svg width="18" height="18" viewBox="0 0 18 18"><path d="M6 17l-5-7q1-2 4 1L4 4q1-2 2 0l1 5V2q1-2 2 0v7l2-7q2 0 1 2l-1 6 3-4q2 0 1 2l-2 6-3 3z" fill="#fff" stroke="#888"/></svg></button>
        <button aria-label="Zoom"><svg width="18" height="18" viewBox="0 0 18 18"><circle cx="8" cy="7" r="6" fill="#eee" stroke="#888" stroke-width="1.500"/><path d="M5 4h6v6H5z" fill="#fff" stroke="#999"/><path d="M12 11l5 5" stroke="#888" stroke-width="3"/></svg></button>
        <span class="drop"></span>
        <button aria-label="Orbit"><svg width="18" height="18" viewBox="0 0 18 18"><path d="M11 13q-8 1-10-3 0-5 7-5 8 0 9 4-1 3-4 3" fill="none" stroke="#888"/><ellipse cx="9" cy="9" rx="4" ry="8" fill="#fff" stroke="#888"/><path d="M7 9h4M9 7v4M12 5h4M14 3v4" stroke="#888"/></svg></button>
        <span class="drop"></span>
        <button aria-label="Look at"><svg width="18" height="18" viewBox="0 0 18 18"><path d="M1 6h16v11H1z" fill="#fafafa" stroke="#888"/><path d="M5 9h9v5H5z" fill="#dde" stroke="#888"/><path d="M2 6l5-4-1 2 8-2v4" fill="#ddd" stroke="#999"/></svg></button>
        <svg class="mini low" width="8" height="8" viewBox="0 0 8 8"><circle cx="4" cy="4" r="3.500" fill="#ccc" stroke="#999"/><path d="M2 4h4" stroke="#fff"/></svg>
      </div>
    </div>
  </main>

  <footer class="status"><span class="ready">Ready</span><span class="cell">1</span><span class="cell">1</span></footer>

  <!-- Taskbar -->
  <div class="taskbar">
    <button class="start" aria-label="Start"><svg width="38" height="38" viewBox="0 0 38 38">
      <defs><radialGradient id="orb" cx=".5" cy="1" r=".9"><stop offset="0" stop-color="#43e0ff"/><stop offset=".45" stop-color="#1c6fa8"/><stop offset="1" stop-color="#5b91ad"/></radialGradient></defs>
      <circle cx="19" cy="19" r="18" fill="url(#orb)" stroke="#9fc4d6"/>
      <path d="M10 10q4-3 9 0l-2 8q-4-2-9 0z" fill="#e4572b"/><path d="M20 11q5 3 10 0l-2 8q-5 2-10-1z" fill="#93c83d"/><path d="M8 20q4-2 8 0l-2 8q-4-3-8 0z" fill="#49a9e8"/><path d="M18 20q5 3 9 1l-2 8q-4 2-9-1z" fill="#fbc82e"/>
      <path d="M4 13Q10 1 19 2q10 0 15 11Q19 5 4 13z" fill="#fff" opacity=".3"/></svg></button>
    <div class="tasks">
      <button class="pin" aria-label="Skype"><svg width="16" height="16" viewBox="0 0 16 16"><path d="M4 0q3-1 4 1 7 0 7 7 2 3 0 6-2 3-6 1-7 1-8-7-2-2 0-6 1-2 3-2z" fill="#12a5e8"/><text x="4" y="12" font-size="12" font-weight="700" fill="#fff">S</text></svg></button>
      <button class="pin" aria-label="Media player"><svg width="16" height="16" viewBox="0 0 16 16"><path d="M0 0h16v16H0z" fill="#b7d9f2"/><circle cx="8" cy="8" r="6.500" fill="#f78a14"/><path d="M6 4l6 4-6 4z" fill="#fff"/></svg></button>
      <button class="task" aria-label="Explorer"><svg width="18" height="16" viewBox="0 0 18 16"><path d="M1 2l5-1 1 1h9v12H1z" fill="#f2dd83"/><path d="M3 4h12v4H3z" fill="#fbf4c5"/><path d="M2 15v-6q7-3 14 0v6h-3v-4H6v4z" fill="#6bbfe8" stroke="#cfeaf8"/></svg></button>
      <button class="task current" aria-label="Inventor"><svg width="16" height="16" viewBox="0 0 16 16"><path d="M0 0h16v16H0z" fill="#f59c4c"/><path d="M4 2h8v3h-2v6h2v3H4v-3h2V5H4z" fill="#a43b08"/></svg></button>
      <button class="task" aria-label="Browser"><svg width="16" height="16" viewBox="0 0 16 16"><circle cx="8" cy="8" r="7" fill="#124c92"/><path d="M3 4q5-4 9-1l-3 4-5 2z" fill="#3b8fd5"/><path d="M9 9l4-2-1 5z" fill="#2a70bb"/></svg></button>
    </div>
    <div class="tray">
      <span class="lang">IN</span>
      <button aria-label="Show hidden icons"><svg width="8" height="5" viewBox="0 0 8 5"><path d="M0 5h8L4 0z" fill="#fff"/></svg></button>
      <svg width="16" height="16" viewBox="0 0 16 16"><path d="M4 1l4 3-4 3-4-3zM12 1l4 3-4 3-4-3zM4 7l4 3-4 3-4-3zM12 7l4 3-4 3-4-3z" fill="#5fb2f0"/><path d="M8 4l4 3-4 3-4-3z" fill="#d6ecfc"/><circle cx="11" cy="12" r="4" fill="#2b9c2f"/><path d="M9 12l2 2 2-4" stroke="#fff" fill="none"/></svg>
      <svg width="16" height="16" viewBox="0 0 16 16"><path d="M5 4h10v8H5zM10 12v2M7 15h6M3 6v9h4M1 1v4h4V1M3 0v4" fill="none" stroke="#fff" stroke-width="1.300"/></svg>
      <svg width="14" height="14" viewBox="0 0 14 14"><path d="M1 4h3l4-4v14l-4-4H1z" fill="#fff"/><path d="M10 4q2 3 0 6" stroke="#ccc" fill="none"/></svg>
      <svg width="16" height="16" viewBox="0 0 16 16"><circle cx="8" cy="8" r="8" fill="#e5eef0"/><circle cx="8" cy="8" r="5.500" fill="#2aa3bd"/><circle cx="8" cy="7" r="2.500" fill="#7fdff0"/></svg>
      <time class="clock">17:28</time>
      <button class="desktop" aria-label="Show desktop"></button>
    </div>
  </div>
</div>
</body>
</html>
```
FILE: styles.css
```css
* {
  box-sizing: border-box;
}

body {
  margin: 0;
  font-family: "Open Sans", "Noto Sans", sans-serif;
  font-size: 12px;
  color: #333;
}

button {
  border: 0;
  margin: 0;
  padding: 0;
  background: none;
  font: inherit;
  color: inherit;
}

svg {
  display: block;
  flex: none;
}

.app {
  display: flex;
  flex-direction: column;
  height: 100vh;
  overflow: hidden;
}

/* Header */
.header {
  display: grid;
  grid-template-columns: 42px 1fr;
  grid-template-rows: 24px 18px;
  background: #404040;
}

.app-button {
  grid-row: 1 / 3;
  border: 1px solid #111;
  background: linear-gradient(#a5a5a5, #666);
}

.titlebar {
  display: flex;
  align-items: center;
  padding-left: 4px;
  background: linear-gradient(#8a8a8a, #6e6e6e 50%, #505050);
  border-top: 1px solid #555;
}

.qat {
  display: flex;
  align-items: center;
  justify-content: center;
  width: 24px;
  height: 23px;
  flex: none;
}

.caret {
  flex: none;
  width: 6px;
  margin: 0 3px;
  border: 3px solid transparent;
  border-top: 4px solid #3a3a3a;
  border-bottom: 0;
}

.sep {
  flex: none;
  width: 1px;
  height: 20px;
  margin: 0 3px;
  background: #8a8a8a;
}

.combo {
  display: flex;
  align-items: center;
  position: relative;
  flex: none;
  width: 99px;
  height: 21px;
  padding-left: 3px;
  background: linear-gradient(#e6e6e6, #c8c8c8);
}

.combo::after {
  content: "";
  position: absolute;
  right: 2px;
  top: 9px;
  border: 4px solid transparent;
  border-top-color: #444;
  border-bottom: 0;
}

.combo select {
  appearance: none;
  width: 100%;
  border: 0;
  padding: 0 3px;
  background: none;
  font: inherit;
  color: #111;
}

.fx {
  font: italic 16px "Liberation Serif", serif;
  color: #111;
}

.fx sub {
  font-size: 11px;
}

.qat-more {
  width: 15px;
  padding-left: 3px;
}

.doc-title {
  flex: 1;
  height: 23px;
  line-height: 22px;
  padding-left: 16px;
  text-align: center;
  color: #111;
  background: linear-gradient(90deg, #8fb0cc, #a8bfd4 40%, #b4c6d8 65%, #91abc4);
}

.play {
  width: 14px;
  height: 23px;
  padding-left: 5px;
}

.search {
  width: 179px;
  height: 22px;
  border: 1px solid #888;
  padding: 2px 1px 0;
  background: #f4f4f4;
  font: italic 11px "Open Sans", sans-serif;
}

.search::placeholder {
  color: #777;
}

.info {
  display: flex;
  align-items: center;
  height: 23px;
  width: 288px;
}

.user {
  flex: 1;
  justify-content: flex-start;
  gap: 5px;
  padding-left: 4px;
  font-size: 11px;
  color: #fff;
}

.window-buttons {
  display: flex;
  align-self: flex-start;
  width: 123px;
  height: 23px;
  padding: 0 3px 6px 16px;
  background: linear-gradient(90deg, #5b5f61, #8a8e90 40%, #555);
}

.window-buttons button {
  display: flex;
  align-items: center;
  justify-content: center;
  width: 28px;
  border: 1px solid #ccc;
  border-top: 0;
  background: linear-gradient(#a6a6a6, #666);
}

.window-buttons .close {
  flex: 1;
  background: linear-gradient(#dc8472, #c23420 50%, #d6553a);
  border-radius: 0 0 4px 0;
}

/* Tabs */
.tabs {
  display: flex;
  padding-left: 2px;
}

.tabs button {
  padding: 0 9px;
  line-height: 16px;
  color: #eee;
  white-space: nowrap;
}

.tabs .active {
  padding-right: 7px;
  color: #333;
  background: linear-gradient(#d5d5d5, #fff);
  border-radius: 2px 2px 0 0;
}

.tabs .ribbon-toggle {
  padding-left: 22px;
}

/* Ribbon */
.ribbon {
  display: flex;
  flex: none;
  height: 94px;
  background: #fff;
  border-bottom: 1px solid #b5b5b5;
}

.panel {
  display: flex;
  flex-direction: column;
  flex: none;
  border-right: 1px solid #a8a8a8;
  margin-right: 1px;
}

.panel h2 {
  margin: 0;
  height: 17px;
  line-height: 17px;
  font-size: 12px;
  font-weight: 400;
  text-align: center;
  background: #ececec;
  white-space: nowrap;
}

.tools {
  display: flex;
  height: 76px;
  padding-top: 3px;
}

.p-sketch { width: 79px; }
.p-prim { width: 62px; }
.p-create { width: 233px; }
.p-modify { width: 336px; }
.p-work { width: 126px; }
.p-pattern { width: 48px; }
.p-surface { width: 209px; }
.p-plastic { width: 141px; }
.p-harness { width: 52px; }
.p-convert { flex: 1; border-right: 0; margin-right: 0; }

.fly {
  display: inline-block;
  margin-left: 2px;
  vertical-align: 2px;
  border: 4px solid transparent;
  border-top-color: currentColor;
  border-bottom: 0;
}

.drop {
  display: block;
  width: 6px;
  border: 3px solid transparent;
  border-top-color: #444;
  border-bottom: 0;
}

.big {
  display: flex;
  flex-direction: column;
  align-items: center;
  flex: 1;
  padding-top: 2px;
  line-height: 15px;
  white-space: nowrap;
}

.big svg {
  margin-bottom: 4px;
}

.big .drop {
  margin-top: 3px;
}

.side {
  align-self: flex-end;
  margin: 0 4px 16px -10px;
}

.p-create .big,
.p-modify .big,
.p-work .big {
  flex: none;
}

.p-create .big { width: 46px; }
.p-modify .big { width: 38px; }
.p-work .big { width: 54px; }
.p-modify .tools { padding-left: 2px; }

.cols {
  display: grid;
  grid-auto-flow: column;
  grid-template-rows: repeat(3, 24px);
  align-content: start;
  padding-left: 6px;
}

.p-create .cols { grid-template-columns: 65px auto; }
.p-modify .cols { grid-template-columns: 77px 80px auto; padding-left: 4px; }
.p-work .cols { padding-left: 3px; }
.p-surface .cols { grid-template-columns: 114px auto; }
.p-plastic .cols { grid-template-columns: 55px auto; }

.cols button {
  display: flex;
  align-items: center;
  gap: 5px;
  padding-bottom: 1px;
  white-space: nowrap;
}

.cols svg,
.icons-only svg {
  width: 16px;
  height: 16px;
}

.cols .drop {
  margin-left: 2px;
}

.icons-only {
  flex-direction: column;
  align-items: center;
}

.icons-only button {
  display: flex;
  align-items: center;
  justify-content: center;
  width: 24px;
  height: 22px;
  margin: 1px 0;
  border: 1px solid #ccc;
  background: #f8f8f8;
}

/* Workspace */
.workspace {
  display: flex;
  flex: 1;
  min-height: 0;
  border-top: 2px solid #888;
}

.browser {
  display: flex;
  flex-direction: column;
  width: 177px;
  flex: none;
  padding: 4px 3px 3px;
  background: #f0f0f0;
  border-right: 2px solid #888;
  font-size: 11px;
  color: #000;
}

.grip {
  display: flex;
  align-items: center;
  justify-content: space-between;
  height: 11px;
  padding: 0 3px 3px 1px;
}

.grip span {
  width: 154px;
  height: 6px;
  border: solid #aaa;
  border-width: 1px 1px 1px 0;
}

.browser-head {
  display: flex;
  align-items: center;
  justify-content: space-between;
  height: 21px;
  padding: 0 3px 0 8px;
  background: #ababab;
}

.browser-head button {
  font-size: 13px;
  font-weight: 700;
  color: #fff;
}

.browser-tools {
  display: flex;
  align-items: center;
  height: 27px;
  padding: 0 4px 3px;
  gap: 8px;
}

.browser-tools button + button {
  padding: 2px 0 2px 8px;
  border-left: 1px solid #999;
}

.tree {
  flex: 1;
  margin: 0;
  padding: 0 4px;
  list-style: none;
  background: #fff;
  border: 1px solid #666;
}

.tree li {
  display: flex;
  align-items: center;
  height: 18px;
  gap: 2px;
  padding-left: 20px;
  position: relative;
  white-space: nowrap;
}

.tree li.root {
  padding-left: 1px;
}

.tree li svg {
  width: 16px;
  height: 16px;
}

/* tree lines */
.tree li:not(.root)::before {
  content: "";
  position: absolute;
  left: 4px;
  top: 0;
  width: 12px;
  height: 9px;
  border: solid #888;
  border-width: 0 0 1px 1px;
}

.tree li:not(.root):not(.end)::after {
  content: "";
  position: absolute;
  left: 4px;
  top: 9px;
  height: 9px;
  border-left: 1px solid #888;
}

.plus {
  position: absolute;
  z-index: 1;
  left: 0;
  top: 4px;
  width: 9px;
  height: 9px;
  border: 1px solid #888;
  background: linear-gradient(#000, #000) center / 5px 1px no-repeat, linear-gradient(#000, #000) center / 1px 5px no-repeat, #fff;
}

.viewport {
  position: relative;
  flex: 1;
  min-width: 0;
  background: #fff;
  border-right: 2px solid #ddd;
}

.scene {
  width: 100%;
  height: 100%;
}

.triad text {
  font-size: 12px;
}

.cube text {
  font-size: 7px;
  font-weight: 700;
  fill: #999;
}

.doc-buttons {
  position: absolute;
  top: 6px;
  right: 1px;
  display: flex;
  gap: 8px;
}

.navbar {
  position: absolute;
  top: 121px;
  right: 0;
  width: 36px;
  height: 200px;
  display: flex;
  flex-direction: column;
  align-items: center;
  padding: 3px;
  background: #f4f4f4;
  border: 2px solid #bbb;
  border-radius: 5px;
}

.navbar button {
  margin-bottom: 6px;
}

.navbar .mini {
  align-self: flex-end;
  margin-bottom: 10px;
}

.navbar .mini.low {
  margin: auto 0 0;
}

.navbar .drop {
  margin: 0 0 6px;
  border-top-color: #888;
}

.navbar .wheel {
  margin-bottom: 7px;
}

.navbar hr {
  width: 26px;
  margin: 0 0 5px;
  border: 0;
  border-top: 1px solid #bbb;
}

/* Status bar */
.status {
  display: flex;
  align-items: center;
  flex: none;
  height: 26px;
  padding-top: 3px;
  background: linear-gradient(#fff, #b0b0b0);
  border-top: 1px solid #ddd;
  color: #000;
}

.ready {
  flex: 1;
  padding-left: 1px;
}

.cell {
  width: 39px;
  padding-left: 8px;
  border-left: 1px solid #ddd;
}

/* Taskbar */
.taskbar {
  display: flex;
  flex: none;
  height: 30px;
  position: relative;
  background: linear-gradient(#3b3e42, #14171a 4px, #07090b);
  color: #fff;
}

.start {
  position: absolute;
  left: 8px;
  top: -5px;
}

.tasks {
  display: flex;
  flex: 1;
  padding-left: 58px;
}

.pin {
  display: flex;
  align-items: center;
  justify-content: center;
  width: 46px;
}

.task {
  display: flex;
  align-items: center;
  justify-content: center;
  width: 42px;
  height: 28px;
  margin: 1px 2px;
  border: 1px solid #777;
  border-radius: 2px;
  background: linear-gradient(135deg, #555, #1c1e20 60%);
}

.task.current {
  background: linear-gradient(135deg, #ccc, #777);
  border-color: #ccc;
}

.tray {
  display: flex;
  align-items: center;
  gap: 8px;
}

.lang {
  font-size: 11px;
  margin: 0 10px 6px 0;
}

.tray > button {
  margin-right: 5px;
}

.clock {
  margin: 0 18px 0 25px;
}

.tray .desktop {
  width: 14px;
  height: 28px;
  margin: 0;
  border: 1px solid #888;
  background: linear-gradient(135deg, #555, #1c1c1c 50%);
}
```
